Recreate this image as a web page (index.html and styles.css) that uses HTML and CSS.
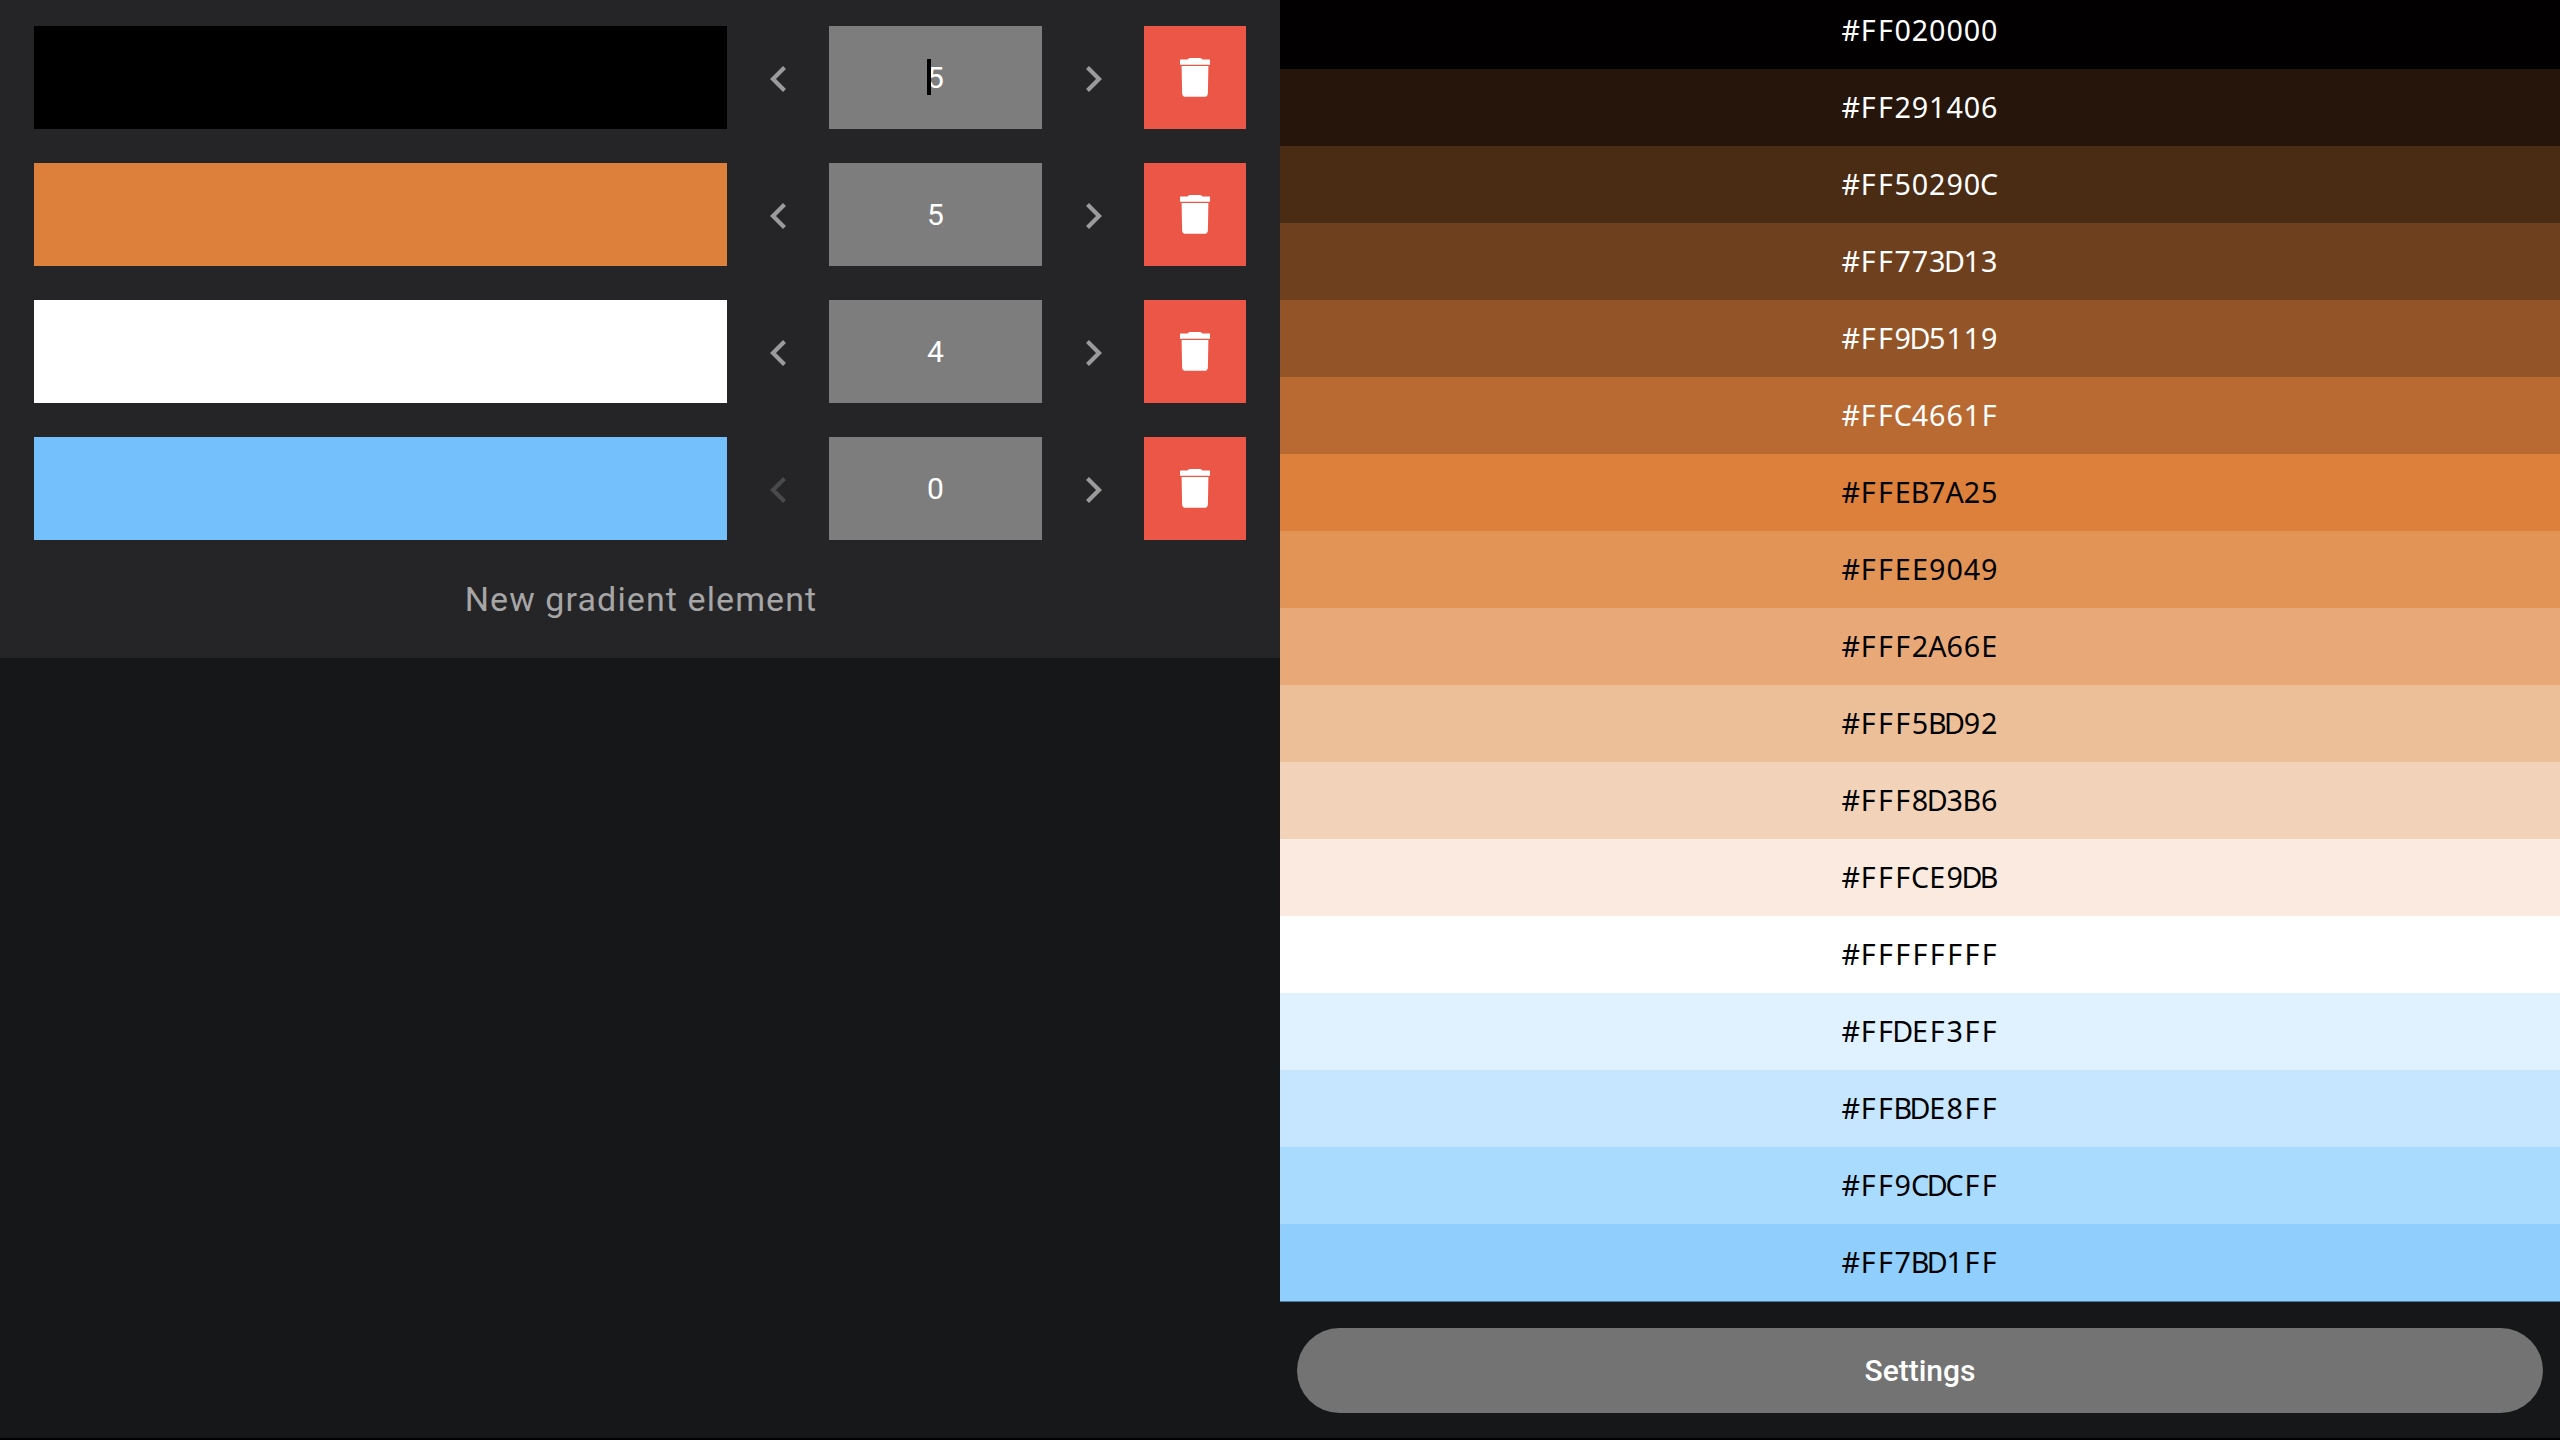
FILE: index.html
```html
<!DOCTYPE html>
<html lang="en">
<head>
<meta charset="utf-8">
<title>Gradient editor</title>
<link rel="stylesheet" href="styles.css">
</head>
<body>
<svg class="defs" width="0" height="0" aria-hidden="true">
  <symbol id="chev-l" viewBox="0 0 16 26"><path d="M14.500 1.500 3 13l11.500 11.500" fill="none" stroke="currentColor" stroke-width="4.200"/></symbol>
  <symbol id="chev-r" viewBox="0 0 16 26"><path d="M1.500 1.500 13 13 1.500 24.500" fill="none" stroke="currentColor" stroke-width="4.200"/></symbol>
  <symbol id="trash" viewBox="0 0 30 39"><path fill="currentColor" d="M.6 1.500H7.500C8.500.4 9.500 0 11 0h8c1.500 0 2.500.4 3.500 1.500h6.900a.6.6 0 0 1 .6.6v4.600H0V2.100a.6.6 0 0 1 .6-.6ZM1.600 7.900h26.800l-.5 27a3.900 3.900 0 0 1-3.900 3.900H6a3.900 3.900 0 0 1-3.900-3.900Z"/></symbol>
</svg>
<main class="app">
  <section class="left">
    <div class="panel">
      <div class="row">
        <div class="swatch swatch-black"></div>
        <button class="step"><svg class="chev"><use href="#chev-l"/></svg></button>
        <div class="count"><span class="count-text"><span class="caret"></span>5</span></div>
        <button class="step step-next"><svg class="chev"><use href="#chev-r"/></svg></button>
        <button class="del"><svg class="bin"><use href="#trash"/></svg></button>
      </div>
      <div class="row">
        <div class="swatch swatch-orange"></div>
        <button class="step"><svg class="chev"><use href="#chev-l"/></svg></button>
        <div class="count"><span class="count-text">5</span></div>
        <button class="step step-next"><svg class="chev"><use href="#chev-r"/></svg></button>
        <button class="del"><svg class="bin"><use href="#trash"/></svg></button>
      </div>
      <div class="row">
        <div class="swatch swatch-white"></div>
        <button class="step"><svg class="chev"><use href="#chev-l"/></svg></button>
        <div class="count"><span class="count-text">4</span></div>
        <button class="step step-next"><svg class="chev"><use href="#chev-r"/></svg></button>
        <button class="del"><svg class="bin"><use href="#trash"/></svg></button>
      </div>
      <div class="row">
        <div class="swatch swatch-blue"></div>
        <button class="step step-off"><svg class="chev"><use href="#chev-l"/></svg></button>
        <div class="count"><span class="count-text">0</span></div>
        <button class="step step-next"><svg class="chev"><use href="#chev-r"/></svg></button>
        <button class="del"><svg class="bin"><use href="#trash"/></svg></button>
      </div>
      <div class="new">New gradient element</div>
    </div>
  </section>
  <section class="right">
    <ul class="colors">
      <li class="color c1"><span class="hex"><b>#</b><b>F</b><b>F</b><b>0</b><b>2</b><b>0</b><b>0</b><b>0</b><b>0</b></span></li>
      <li class="color c2"><span class="hex"><b>#</b><b>F</b><b>F</b><b>2</b><b>9</b><b>1</b><b>4</b><b>0</b><b>6</b></span></li>
      <li class="color c3"><span class="hex"><b>#</b><b>F</b><b>F</b><b>5</b><b>0</b><b>2</b><b>9</b><b>0</b><b>C</b></span></li>
      <li class="color c4"><span class="hex"><b>#</b><b>F</b><b>F</b><b>7</b><b>7</b><b>3</b><b>D</b><b>1</b><b>3</b></span></li>
      <li class="color c5"><span class="hex"><b>#</b><b>F</b><b>F</b><b>9</b><b>D</b><b>5</b><b>1</b><b>1</b><b>9</b></span></li>
      <li class="color c6"><span class="hex"><b>#</b><b>F</b><b>F</b><b>C</b><b>4</b><b>6</b><b>6</b><b>1</b><b>F</b></span></li>
      <li class="color c7 ink"><span class="hex"><b>#</b><b>F</b><b>F</b><b>E</b><b>B</b><b>7</b><b>A</b><b>2</b><b>5</b></span></li>
      <li class="color c8 ink"><span class="hex"><b>#</b><b>F</b><b>F</b><b>E</b><b>E</b><b>9</b><b>0</b><b>4</b><b>9</b></span></li>
      <li class="color c9 ink"><span class="hex"><b>#</b><b>F</b><b>F</b><b>F</b><b>2</b><b>A</b><b>6</b><b>6</b><b>E</b></span></li>
      <li class="color c10 ink"><span class="hex"><b>#</b><b>F</b><b>F</b><b>F</b><b>5</b><b>B</b><b>D</b><b>9</b><b>2</b></span></li>
      <li class="color c11 ink"><span class="hex"><b>#</b><b>F</b><b>F</b><b>F</b><b>8</b><b>D</b><b>3</b><b>B</b><b>6</b></span></li>
      <li class="color c12 ink"><span class="hex"><b>#</b><b>F</b><b>F</b><b>F</b><b>C</b><b>E</b><b>9</b><b>D</b><b>B</b></span></li>
      <li class="color c13 ink"><span class="hex"><b>#</b><b>F</b><b>F</b><b>F</b><b>F</b><b>F</b><b>F</b><b>F</b><b>F</b></span></li>
      <li class="color c14 ink"><span class="hex"><b>#</b><b>F</b><b>F</b><b>D</b><b>E</b><b>F</b><b>3</b><b>F</b><b>F</b></span></li>
      <li class="color c15 ink"><span class="hex"><b>#</b><b>F</b><b>F</b><b>B</b><b>D</b><b>E</b><b>8</b><b>F</b><b>F</b></span></li>
      <li class="color c16 ink"><span class="hex"><b>#</b><b>F</b><b>F</b><b>9</b><b>C</b><b>D</b><b>C</b><b>F</b><b>F</b></span></li>
      <li class="color c17 ink"><span class="hex"><b>#</b><b>F</b><b>F</b><b>7</b><b>B</b><b>D</b><b>1</b><b>F</b><b>F</b></span></li>
    </ul>
    <div class="footer"><button class="settings">Settings</button></div>
  </section>
</main>
</body>
</html>
```

FILE: styles.css
```css
* { box-sizing: border-box; }
html, body { margin: 0; padding: 0; }
body { width: 2560px; height: 1440px; overflow: hidden; background: #000; font-family: Roboto, sans-serif; }
.defs { display: block; height: 0; }
.app { display: flex; width: 2560px; height: 1438px; background: #161718; }
.left { width: 1280px; flex: none; }
.panel { height: 658px; background: #252527; padding: 26px 34px 0; }
.row { display: flex; align-items: stretch; height: 103px; margin-bottom: 34px; }
.swatch { width: 693px; flex: none; }
.swatch-black { background: #000; }
.swatch-orange { background: #dd803c; }
.swatch-white { background: #fff; }
.swatch-blue { background: #74c0fc; }
.step { width: 102px; flex: none; padding: 2px 0 0; border: 0; background: none; color: #9b9b9c; display: flex; align-items: center; justify-content: center; }
.step-next { padding-left: 2px; }
.step-off { color: #48494b; }
.chev { width: 16px; height: 26px; }
.count { width: 213px; flex: none; background: #7d7d7e; display: flex; align-items: center; justify-content: center; color: #fff; font-size: 30px; }
.count-text { position: relative; }
.caret { position: absolute; left: 0; top: -1px; width: 4px; height: 36px; background: #000; }
.del { width: 102px; flex: none; padding: 0; border: 0; background: #ec5647; color: #fff; display: flex; align-items: center; justify-content: center; }
.bin { width: 30px; height: 39px; }
.new { text-align: center; color: #a6a6a7; font-size: 34px; letter-spacing: 1.1px; line-height: 40px; margin-top: 39px; padding-left: 2px; }
.right { width: 1280px; flex: none; display: flex; flex-direction: column; }
.colors { list-style: none; margin: 0; padding: 0; height: 1302px; overflow: hidden; flex: none; border-bottom: 1px solid #4f7a99; }
.color { height: 77px; padding-bottom: 2px; display: flex; align-items: center; justify-content: center; font-family: "Noto Sans", sans-serif; font-size: 28.7px; color: #fff; }
.hex { display: flex; }
.hex b { width: 17.3px; font-weight: 400; display: flex; justify-content: center; }
.c1 { margin-top: -8px; background: #020000; }
.c2 { background: #25150a; }
.c3 { background: #4a2b14; }
.c4 { background: #6f401e; }
.c5 { background: #935528; }
.c6 { background: #b86a32; }
.c7 { background: #dd803c; }
.c8 { background: #e29356; }
.c9 { background: #e8a878; }
.c10 { background: #edbf98; }
.c11 { background: #f2d3b9; }
.c12 { background: #faeadf; }
.c13 { background: #fff; }
.c14 { background: #e0f1ff; }
.c15 { background: #c6e6ff; }
.c16 { background: #a9daff; }
.c17 { background: #8fcefd; }
.ink { color: #000; }
.footer { flex: 1; padding: 26px 17px 0; }
.settings { width: 100%; height: 85px; border: 0; border-radius: 43px; background: #737373; color: #fff; font-family: Roboto, sans-serif; font-weight: 500; font-size: 30px; }
```
